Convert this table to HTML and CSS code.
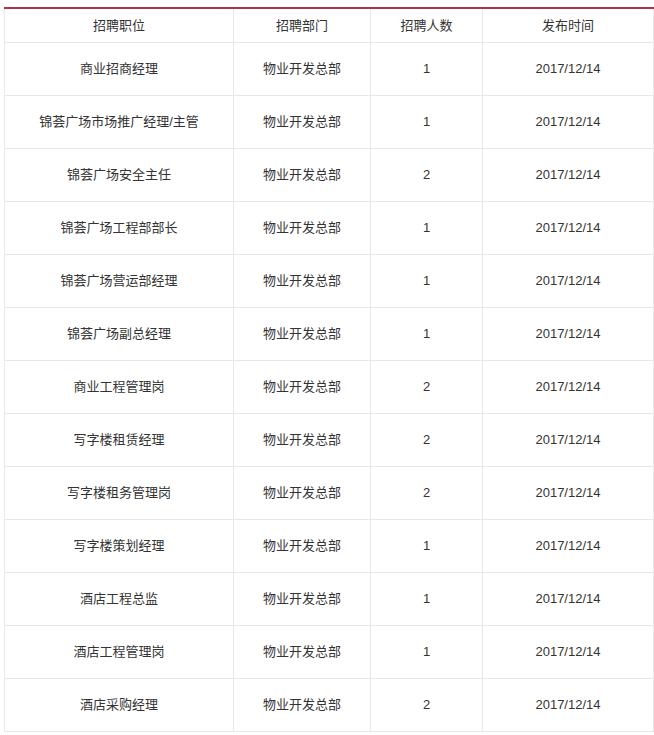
FILE: index.html
```html
<!DOCTYPE html>
<html lang="zh">
<head>
<meta charset="utf-8">
<link rel="stylesheet" href="styles.css">
</head>
<body>
<table class="jobs">
<colgroup><col class="c1"><col class="c2"><col class="c3"><col class="c4"></colgroup>
<thead>
<tr><th>招聘职位</th><th>招聘部门</th><th>招聘人数</th><th>发布时间</th></tr>
</thead>
<tbody>
<tr><td>商业招商经理</td><td>物业开发总部</td><td>1</td><td>2017/12/14</td></tr>
<tr><td>锦荟广场市场推广经理/主管</td><td>物业开发总部</td><td>1</td><td>2017/12/14</td></tr>
<tr><td>锦荟广场安全主任</td><td>物业开发总部</td><td>2</td><td>2017/12/14</td></tr>
<tr><td>锦荟广场工程部部长</td><td>物业开发总部</td><td>1</td><td>2017/12/14</td></tr>
<tr><td>锦荟广场营运部经理</td><td>物业开发总部</td><td>1</td><td>2017/12/14</td></tr>
<tr><td>锦荟广场副总经理</td><td>物业开发总部</td><td>1</td><td>2017/12/14</td></tr>
<tr><td>商业工程管理岗</td><td>物业开发总部</td><td>2</td><td>2017/12/14</td></tr>
<tr><td>写字楼租赁经理</td><td>物业开发总部</td><td>2</td><td>2017/12/14</td></tr>
<tr><td>写字楼租务管理岗</td><td>物业开发总部</td><td>2</td><td>2017/12/14</td></tr>
<tr><td>写字楼策划经理</td><td>物业开发总部</td><td>1</td><td>2017/12/14</td></tr>
<tr><td>酒店工程总监</td><td>物业开发总部</td><td>1</td><td>2017/12/14</td></tr>
<tr><td>酒店工程管理岗</td><td>物业开发总部</td><td>1</td><td>2017/12/14</td></tr>
<tr><td>酒店采购经理</td><td>物业开发总部</td><td>2</td><td>2017/12/14</td></tr>
</tbody>
</table>
</body>
</html>
```
FILE: styles.css
```css
html, body {
  margin: 0;
  padding: 0;
  background: #fff;
}
body {
  padding: 7px 0 0 4px;
  font-family: "Liberation Sans", "Noto Sans CJK SC", sans-serif;
  font-size: 13px;
  color: #333;
}
.jobs {
  border-collapse: collapse;
  table-layout: fixed;
  width: 649px;
  border-top: 2px solid #b3304a;
}
.c1 { width: 229px; }
.c2 { width: 137px; }
.c3 { width: 112px; }
.c4 { width: 171px; }
.jobs th,
.jobs td {
  border: 1px solid #e8e8e8;
  text-align: center;
  font-weight: normal;
  padding: 0;
  line-height: 16px;
}
.jobs thead th {
  border-top: none;
  height: 33px;
}
.jobs td {
  height: 52px;
}
```
